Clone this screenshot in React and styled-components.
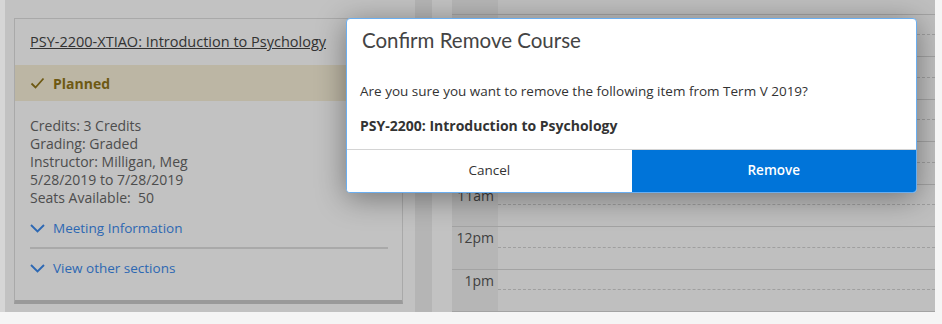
import React from 'react';
import styled, { createGlobalStyle } from 'styled-components';

const GlobalStyle = createGlobalStyle`
  html, body {
    margin: 0;
    padding: 0;
    background: #f5f5f5;
    font-family: "Open Sans", "Liberation Sans", sans-serif;
  }
`;

// outer window frame
const Frame = styled.div`
  display: flex;
  width: 942px;
  height: 324px;
  overflow: hidden;
`;

const Gutter = styled.div`
  width: 5px;
  height: 312px;
  background: #d6d6d6;
`;

const Screen = styled.div`
  position: relative;
  width: 930px;
  height: 312px;
  overflow: hidden;
  display: flex;
  background: #ffffff;
`;

const LeftPane = styled.div`
  padding: 18px 0 0 9px;
  width: 389px;
`;

const Card = styled.div`
  background: #ffffff;
  border: 1px solid #dedede;
  border-bottom: 4px solid #cbcbcb;
`;

const CardHeader = styled.div`
  padding: 12px 15px 13px;
  line-height: 20px;
`;

const CourseLink = styled.a`
  font-size: 14.5px;
  line-height: 20px;
  color: #444;
  text-decoration: underline;
`;

const StatusBand = styled.div`
  display: flex;
  align-items: center;
  gap: 8px;
  height: 36px;
  padding: 0 15px;
  background: #f7f0d8;
  color: #91761a;
  font-weight: 700;
  font-size: 14px;
`;

const CardBody = styled.div`
  padding: 16px 14px 22px 15px;
`;

const Details = styled.div`
  font-size: 14px;
  line-height: 18px;
  color: #666;
`;

const Toggle = styled.div`
  display: flex;
  align-items: center;
  gap: 8px;
  margin-top: ${p => p.$top}px;
  font-size: 13.5px;
  line-height: 20px;
  color: #3b89ec;
`;

const Rule = styled.div`
  height: 2px;
  margin-top: 9px;
  background: #dedede;
`;

const Splitter = styled.div`
  width: 17px;
  margin-left: 12px;
  background: #eeeeee;
`;

// calendar is scrolled, first hour rows sit above the view
const Calendar = styled.div`
  margin-left: 20px;
  flex: 1;
  overflow: hidden;
`;

const CalendarScroll = styled.div`
  display: flex;
  flex-direction: column;
  margin-top: -28px;
`;

const HourRow = styled.div`
  display: flex;
  height: 42.5px;
  flex-shrink: 0;
  border-bottom: 1px solid #d6d6d6;
  box-sizing: border-box;
`;

const TimeCell = styled.div`
  width: 46px;
  background: #efefef;
  text-align: right;
  padding: 2px 4px 0 0;
  box-sizing: border-box;
  font-size: 14px;
  line-height: 18px;
  color: #555;
`;

const SlotCell = styled.div`
  flex: 1;
  background: #fcfcfc;
  display: flex;
  flex-direction: column;
  justify-content: flex-end;
`;

const HalfLine = styled.div`
  height: 21px;
  border-top: 1px dashed #d2d2d2;
`;

const Backdrop = styled.div`
  position: absolute;
  inset: 0;
  background: rgba(0, 0, 0, 0.24);
`;

const Modal = styled.div`
  position: absolute;
  left: 341px;
  top: 18px;
  width: 571px;
  box-sizing: border-box;
  background: #fff;
  border: 1px solid #6aaef0;
  border-radius: 4px;
  box-shadow: 0 5px 30px rgba(0, 0, 0, 0.4);
  overflow: hidden;
`;

const ModalTitle = styled.h2`
  margin: 0;
  padding: 9px 15px 0;
  font-family: Lato, "Open Sans", sans-serif;
  font-weight: 400;
  font-size: 20.5px;
  line-height: 24px;
  color: #444;
`;

const ModalBody = styled.div`
  padding: 29px 13px 13px;
  font-size: 13.5px;
  line-height: 20px;
  color: #333;
`;

const Para = styled.p`
  margin: ${p => p.$top || 0}px 0 0;
  font-weight: ${p => (p.$bold ? 700 : 400)};
  font-size: ${p => (p.$bold ? 14 : 13.5)}px;
`;

const Footer = styled.div`
  display: flex;
  border-top: 1px solid #d4d4d4;
`;

const ModalButton = styled.button`
  flex: 1;
  height: 42px;
  padding: 0 0 3px;
  border: none;
  margin: 0;
  font-family: "Open Sans", sans-serif;
  font-size: 13.5px;
  font-weight: ${p => (p.$primary ? 600 : 400)};
  background: ${p => (p.$primary ? '#0074d9' : '#fff')};
  color: ${p => (p.$primary ? '#fff' : '#333')};
  cursor: pointer;
`;

const Check = () => (
  <svg width="15" height="12" viewBox="0 0 15 12" fill="none">
    <path d="M1.5 6.5 L5.5 10.5 L13.5 1.5" stroke="currentColor" strokeWidth="1.8" />
  </svg>
);

const Chevron = () => (
  <svg width="15" height="9" viewBox="0 0 15 9" fill="none">
    <path d="M1 1 L7.5 7.5 L14 1" stroke="currentColor" strokeWidth="1.9" />
  </svg>
);

const hours = ['6am', '7am', '8am', '9am', '10am', '11am', '12pm', '1pm'];

export default function App() {
  return (
    <>
      <GlobalStyle />
      <Frame>
        <Gutter />
        <Screen>
          <LeftPane>
            <Card>
              <CardHeader>
                <CourseLink>PSY-2200-XTIAO: Introduction to Psychology</CourseLink>
              </CardHeader>
              <StatusBand>
                <Check />
                Planned
              </StatusBand>
              <CardBody>
                <Details>
                  <div>Credits: 3 Credits</div>
                  <div>Grading: Graded</div>
                  <div>Instructor: Milligan, Meg</div>
                  <div>5/28/2019 to 7/28/2019</div>
                  <div>Seats Available:&nbsp; 50</div>
                </Details>
                <Toggle $top={11}>
                  <Chevron />
                  Meeting Information
                </Toggle>
                <Rule />
                <Toggle $top={9}>
                  <Chevron />
                  View other sections
                </Toggle>
              </CardBody>
            </Card>
          </LeftPane>
          <Splitter />
          <Calendar>
            <CalendarScroll>
              {hours.map(h => (
                <HourRow key={h}>
                  <TimeCell>{h}</TimeCell>
                  <SlotCell>
                    <HalfLine />
                  </SlotCell>
                </HourRow>
              ))}
            </CalendarScroll>
          </Calendar>
          <Backdrop />
          <Modal role="dialog">
            <ModalTitle>Confirm Remove Course</ModalTitle>
            <ModalBody>
              <Para>Are you sure you want to remove the following item from Term V 2019?</Para>
              <Para $top={15} $bold>PSY-2200: Introduction to Psychology</Para>
            </ModalBody>
            <Footer>
              <ModalButton>Cancel</ModalButton>
              <ModalButton $primary>Remove</ModalButton>
            </Footer>
          </Modal>
        </Screen>
      </Frame>
    </>
  );
}
